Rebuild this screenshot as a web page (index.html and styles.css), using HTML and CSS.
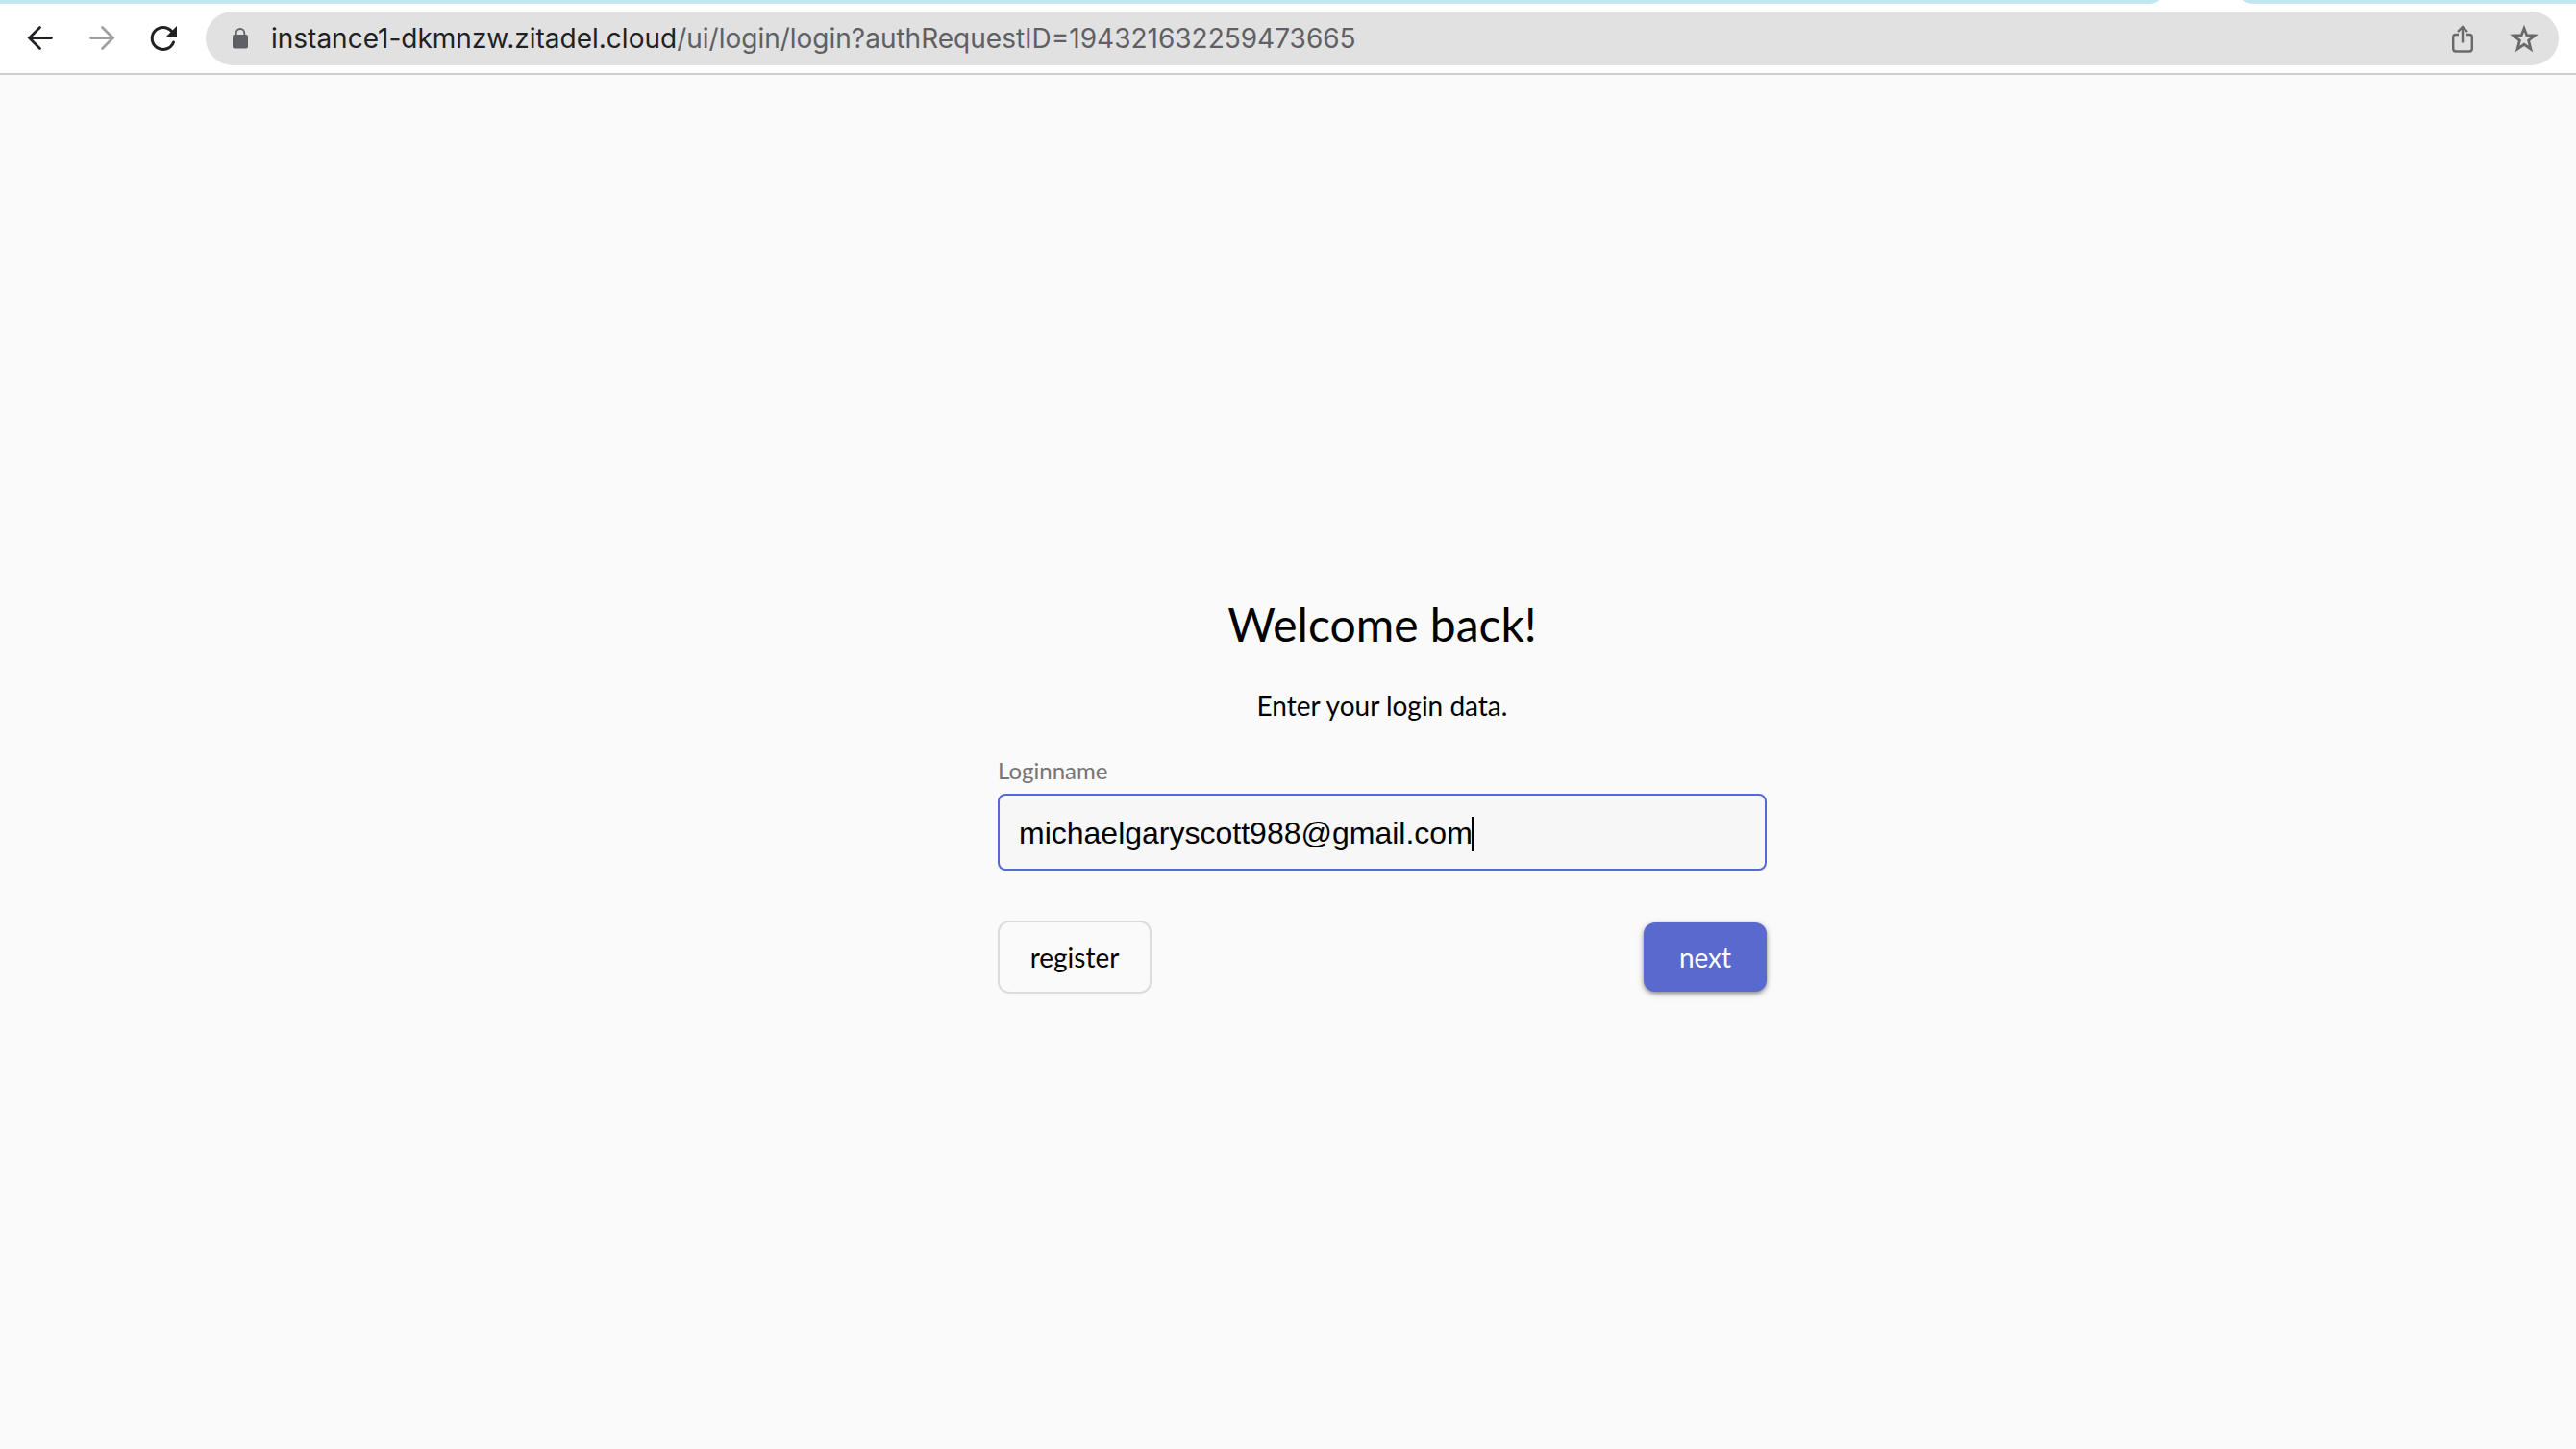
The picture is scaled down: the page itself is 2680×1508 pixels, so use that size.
FILE: index.html
```html
<!DOCTYPE html>
<html lang="en">
<head>
<meta charset="utf-8">
<meta name="viewport" content="width=device-width, initial-scale=1">
<title>Welcome back!</title>
<link rel="stylesheet" href="styles.css">
</head>
<body>
<header class="browser">
  <div class="tabstrip">
    <div class="tabs-before"></div>
    <div class="tabs-after"></div>
  </div>
  <nav class="toolbar" aria-label="Browser toolbar">
    <button class="tool" type="button" aria-label="Back">
      <svg width="32" height="32" viewBox="0 0 32 32" fill="none" stroke="#202124" stroke-width="2.800" stroke-linecap="round"><path d="M27.500 15.500H4.500M15.500 4.500L4.500 15.500L15.500 26.500"/></svg>
    </button>
    <button class="tool" type="button" aria-label="Forward" disabled>
      <svg width="32" height="32" viewBox="0 0 32 32" fill="none" stroke="#a0a0a1" stroke-width="2.800" stroke-linecap="round"><path d="M4.500 15.500H27.500M16.500 4.500L27.500 15.500L16.500 26.500"/></svg>
    </button>
    <button class="tool" type="button" aria-label="Reload">
      <svg width="32" height="32" viewBox="0 0 32 32"><path d="M26.5 20A11.5 11.5 0 1 1 24.500 8.500" fill="none" stroke="#202124" stroke-width="3" stroke-linecap="round"/><path d="M30 3V14H19Z" fill="#202124"/></svg>
    </button>
    <div class="address">
      <svg class="lock" width="16" height="22" viewBox="0 0 16 22"><path d="M3.700 9V5.300a4.300 4.300 0 0 1 8.600 0V9" fill="none" stroke="#5f6368" stroke-width="1.800"/><rect y="7" width="16" height="14.500" rx="2" fill="#5f6065"/></svg>
      <div class="url" role="textbox" aria-label="Address" tabindex="0"><span class="host">instance1-dkmnzw.zitadel.cloud</span>/ui/login/login?authRequestID=194321632259473665</div>
      <button class="action" type="button" aria-label="Share">
        <svg width="32" height="32" viewBox="0 0 32 32" fill="none" stroke="#68696b" stroke-width="2.400"><path d="M12 12H9Q6.200 12 6.200 15V26.500Q6.200 29.500 9 29.500H23Q25.800 29.500 25.800 26.500V15Q25.800 12 23 12H20"/><path d="M16 20.500V4.500M11 9L16 4L21 9"/></svg>
      </button>
      <button class="action" type="button" aria-label="Bookmark this page">
        <svg width="32" height="32" viewBox="0 0 32 32"><path d="M16 5.500L18.800 12.700L27 13L20.600 18.100L22.900 27L16 22.300L9.100 27L11.400 18.100L5 13L13.200 12.700Z" fill="none" stroke="#68696b" stroke-width="2.800"/></svg>
      </button>
    </div>
  </nav>
</header>
<main class="page">
  <form class="login">
    <h1 class="title">Welcome back!</h1>
    <p class="hint">Enter your login data.</p>
    <label class="label" for="loginname">Loginname</label>
    <div class="field">
      <input class="input" id="loginname" type="text" value="michaelgaryscott988@gmail.com" autocomplete="username" spellcheck="false">
      <span class="caret"></span>
    </div>
    <div class="actions">
      <button class="button outlined" type="button">register</button>
      <button class="button primary" type="submit">next</button>
    </div>
  </form>
</main>
</body>
</html>
```
FILE: styles.css
```css
* {
  box-sizing: border-box;
}

body {
  margin: 0;
  min-height: 100vh;
  background: #fafafa;
  color: #000;
  font-family: Lato, sans-serif;
}

button {
  font: inherit;
  cursor: pointer;
}

.browser {
  background: #fff;
  border-bottom: 2px solid #cdcdcd;
}

.tabstrip {
  display: flex;
  align-items: flex-end;
  gap: 76px;
  height: 4px;
  overflow: hidden;
}

.tabs-before,
.tabs-after {
  height: 16px;
  background: #c0e7f1;
}

.tabs-before {
  flex: 1;
  border-bottom-right-radius: 16px;
}

.tabs-after {
  width: 352px;
  border-bottom-left-radius: 16px;
}

.toolbar {
  display: flex;
  align-items: center;
  height: 72px;
  padding: 0 18px 0 10px;
}

.tool,
.action {
  display: flex;
  align-items: center;
  justify-content: center;
  width: 64px;
  height: 56px;
  padding: 0;
  border: 0;
  background: none;
}

.address {
  display: flex;
  flex: 1;
  align-items: center;
  height: 56px;
  margin-left: 12px;
  padding: 0 4px 0 28px;
  border-radius: 28px;
  background: #e1e1e1;
}

.url {
  flex: 1;
  margin-left: 24px;
  color: #5f6065;
  font: 28px/40px Inter, sans-serif;
  white-space: nowrap;
  outline: 0;
}

.host {
  color: #202124;
}

.page {
  display: flex;
  justify-content: center;
  padding: 540px 0 80px 196px;
}

.login {
  display: flex;
  flex-direction: column;
  width: 800px;
}

.title {
  margin: 0;
  font-size: 48px;
  font-weight: 400;
  line-height: 64px;
  text-align: center;
}

.hint {
  margin: 32px 0 0;
  font-size: 28px;
  line-height: 40px;
  text-align: center;
}

.label {
  margin-top: 32px;
  color: #757575;
  font-size: 24px;
  line-height: 32px;
}

.field {
  position: relative;
  margin-top: 8px;
}

.input {
  display: block;
  width: 100%;
  height: 80px;
  padding: 2px 20px 0;
  border: 2px solid #5469d4;
  border-radius: 8px;
  outline: 0;
  background: #f7f7f7;
  color: #000;
  font: 32px "Liberation Sans", Arial, sans-serif;
}

.caret {
  position: absolute;
  top: 24px;
  left: 493px;
  width: 2px;
  height: 36px;
  background: #000;
}

.actions {
  display: flex;
  align-items: center;
  justify-content: space-between;
  margin-top: 52px;
}

.button {
  border-radius: 12px;
  font-size: 28px;
  line-height: 40px;
}

.outlined {
  width: 160px;
  height: 76px;
  border: 2px solid #dcdcdc;
  background: #fafafa;
  color: #000;
}

.primary {
  width: 128px;
  height: 72px;
  border: 0;
  background: #5969cd;
  box-shadow: 0 2px 4px rgba(0, 0, 0, 0.4), 0 2px 10px rgba(0, 0, 0, 0.12);
  color: #fff;
}
```
